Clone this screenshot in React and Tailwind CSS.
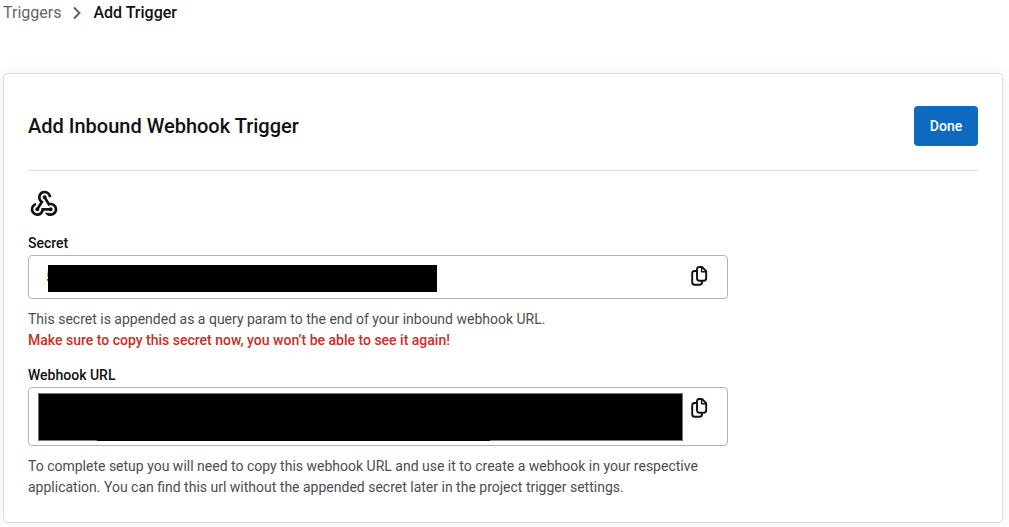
import React from "react";
import { MdWebhook } from "react-icons/md";

function CopyIcon() {
  return (
    <svg className="h-6 w-6 shrink-0" viewBox="0 0 24 24" fill="none" stroke="#111" strokeWidth="1.9" strokeLinejoin="round" strokeLinecap="round">
      <path d="M15 3H12.4Q10 3 10 5.4V14.3Q10 16.7 12.4 16.7H16.8Q19.2 16.7 19.2 14.3V7.2Z" />
      <path d="M14.6 3.6V7.7H18.9" strokeWidth="1.4" />
      <path d="M9.6 7H7.6Q5.2 7 5.2 9.4V18.3Q5.2 20.7 7.6 20.7H12.6Q15 20.7 15 18.3V17.2" />
    </svg>
  );
}

export default function App() {
  return (
    <div className="h-[527px] w-[1009px] overflow-hidden bg-white pl-[3px] pr-1.5 font-['Roboto',sans-serif] text-[#111]">
      <nav className="flex h-[73px] items-start pt-px text-base leading-6">
        <span className="text-[#666]">Triggers</span>
        <svg className="mx-[9px] mt-[5px] h-3.5 w-3.5" viewBox="0 0 14 14" fill="none" stroke="#666" strokeWidth="2.1">
          <path d="M4 1.6l5.4 5.4L4 12.4" />
        </svg>
        <span className="font-medium">Add Trigger</span>
      </nav>
      <main className="h-[450px] rounded border border-[#dfdfdf] bg-white px-6 shadow-[0_0_16px_rgba(0,0,0,0.07)]">
        <header className="flex h-[97px] items-center justify-between border-b border-[#dfdfdf] pt-2">
          <h1 className="text-xl font-medium">Add Inbound Webhook Trigger</h1>
          <button className="h-10 w-16 rounded bg-[#0d6abf] text-sm font-medium text-white">Done</button>
        </header>
        <MdWebhook className="mt-[17px] h-8 w-8" />
        <div className="mt-[13px] h-[22px] text-sm font-medium leading-5">Secret</div>
        <div className="flex h-11 w-[700px] items-start rounded border border-[#b3b3b3] pl-[17px] pr-4 pt-[9px]">
          <div className="flex w-[391px]">
            <span className="flex w-0.5 shrink-0 overflow-hidden text-sm leading-6">5</span>
            <div className="h-[27px] w-[389px] bg-black" />
          </div>
          <div className="-mt-px ml-auto"><CopyIcon /></div>
        </div>
        <p className="mt-[10px] text-sm leading-[21px] text-[#4d4d4d]">This secret is appended as a query param to the end of your inbound webhook URL.</p>
        <p className="text-sm font-medium leading-[21px] text-[#cb2e27]">Make sure to copy this secret now, you won’t be able to see it again!</p>
        <div className="mt-[14px] h-[22px] text-sm font-medium leading-[21px]">Webhook URL</div>
        <div className="flex h-[59px] w-[700px] items-start rounded border border-[#b3b3b3] pl-[9px] pr-4 pt-[5px]">
          <div className="flex h-[48px] w-[645px] flex-col border-l border-r border-t border-l-[#777] border-r-[#777] border-t-[#777]">
            <div className="h-[46px] bg-black" />
            <div className="flex h-px bg-[#777]">
              <div className="ml-[58px] w-[393px] bg-black" />
            </div>
          </div>
          <div className="ml-auto mt-[3px]"><CopyIcon /></div>
        </div>
        <p className="mt-[10px] w-[700px] text-sm leading-[21px] text-[#4d4d4d]">To complete setup you will need to copy this webhook URL and use it to create a webhook in your respective application. You can find this url without the appended secret later in the project trigger settings.</p>
      </main>
    </div>
  );
}
